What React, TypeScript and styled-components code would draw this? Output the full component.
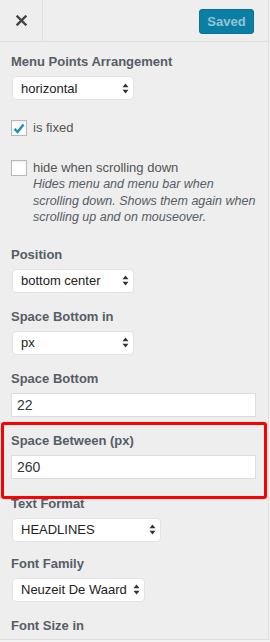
import React from "react";
import styled, { createGlobalStyle } from "styled-components";

const Global = createGlobalStyle`
  html, body { margin: 0; padding: 0; background: #f3f3f3; }
  body { font-family: "Liberation Sans", Arial, sans-serif; color: #555d66; }
  * { box-sizing: border-box; }
`;

const Panel = styled.div`
  width: 269px;
  height: 640px;
  background: #eeeeee;
  border-right: 1px solid #dedede;
  border-bottom: 1px solid #dcdcdc;
  overflow: hidden;
`;

const Header = styled.div`
  display: flex;
  align-items: center;
  height: 42px;
  border-bottom: 1px solid #dddddd;
`;

const CloseButton = styled.div`
  width: 43px;
  height: 41px;
  border-right: 1px solid #dddddd;
  display: flex;
  align-items: center;
  justify-content: center;
`;

const SavedButton = styled.div`
  margin-left: auto;
  margin-right: 14px;
  width: 55px;
  height: 25px;
  border-radius: 3px;
  background: #0a7fa3;
  border: 1px solid #08739a;
  color: #93c4d6;
  font-size: 13px;
  font-weight: bold;
  display: flex;
  align-items: center;
  justify-content: center;
  margin-top: 1px;
`;

const Content = styled.div`
  padding: 11px 12px 0 11px;
  display: flex;
  flex-direction: column;
`;

const Section = styled.div<{ $gap?: number }>`
  position: relative;
  display: flex;
  flex-direction: column;
  margin-bottom: ${(p) => p.$gap ?? 15}px;
`;

const Highlight = styled.div`
  position: absolute;
  left: -10px;
  right: -11px;
  top: -10px;
  bottom: -20px;
  border: 3px solid #ff0000;
  border-radius: 3px;
  pointer-events: none;
  z-index: 2;
`;

const Label = styled.div`
  font-size: 13px;
  font-weight: bold;
  line-height: 18px;
  color: #555d66;
  margin-bottom: 5px;
`;

const SelectBox = styled.div<{ $w: number }>`
  width: ${(p) => p.$w}px;
  height: 24px;
  margin-left: 1px;
  background: #ffffff;
  border: 1px solid #e2e2e2;
  border-radius: 4px;
  display: flex;
  align-items: center;
  padding: 0 4px 0 8px;
  font-size: 13px;
  color: #222222;
`;

const SelectText = styled.span`
  flex: 1;
  white-space: nowrap;
`;

const TextInput = styled.div`
  width: 100%;
  height: 24px;
  background: #ffffff;
  border: 1px solid #dddddd;
  display: flex;
  align-items: center;
  padding: 0 5px;
  font-size: 14px;
  color: #32373c;
`;

const CheckRow = styled.div<{ $mb: number }>`
  display: flex;
  align-items: flex-start;
  gap: 6px;
  margin-bottom: ${(p) => p.$mb}px;
`;

const Box = styled.div`
  width: 16px;
  height: 16px;
  flex: none;
  background: #ffffff;
  border: 1px solid #b4b9be;
  box-shadow: inset 0 1px 2px rgba(0, 0, 0, 0.08);
  display: flex;
  align-items: center;
  justify-content: center;
`;

const CheckText = styled.div`
  display: flex;
  flex-direction: column;
  font-size: 13px;
  line-height: 16.5px;
  color: #555555;
`;

const Description = styled.div`
  font-style: italic;
  font-size: 12.5px;
  line-height: 16.5px;
  color: #555d66;
`;

const Arrows = () => (
  <svg width="7" height="11" viewBox="0 0 7 11">
    <path d="M3.5 0.5 L6.5 4.2 L0.5 4.2 Z" fill="#333" />
    <path d="M3.5 10.5 L6.5 6.8 L0.5 6.8 Z" fill="#333" />
  </svg>
);

const Select = ({ w, value }: { w: number; value: string }) => (
  <SelectBox $w={w}>
    <SelectText>{value}</SelectText>
    <Arrows />
  </SelectBox>
);

export default function App() {
  return (
    <>
      <Global />
      <Panel>
        <Header>
          <CloseButton>
            <svg width="11" height="11" viewBox="0 0 11 11">
              <path d="M1.5 1.5 L9.5 9.5 M9.5 1.5 L1.5 9.5" stroke="#444" strokeWidth="2.4" strokeLinecap="square" />
            </svg>
          </CloseButton>
          <SavedButton>Saved</SavedButton>
        </Header>
        <Content>
          <Section $gap={20}>
            <Label>Menu Points Arrangement</Label>
            <Select w={122} value="horizontal" />
          </Section>
          <CheckRow $mb={23}>
            <Box>
              <svg width="12" height="11" viewBox="0 0 12 11">
                <path d="M1.5 5.8 L4.6 9 L10.5 1.5" stroke="#1e8cbe" strokeWidth="2.4" fill="none" />
              </svg>
            </Box>
            <CheckText>is fixed</CheckText>
          </CheckRow>
          <CheckRow $mb={20}>
            <Box />
            <CheckText>
              <span>hide when scrolling down</span>
              <Description>
                Hides menu and menu bar when scrolling down. Shows them again when scrolling up and on mouseover.
              </Description>
            </CheckText>
          </CheckRow>
          <Section>
            <Label>Position</Label>
            <Select w={122} value="bottom center" />
          </Section>
          <Section>
            <Label>Space Bottom in</Label>
            <Select w={122} value="px" />
          </Section>
          <Section>
            <Label>Space Bottom</Label>
            <TextInput>22</TextInput>
          </Section>
          <Section $gap={16}>
            <Highlight />
            <Label>Space Between (px)</Label>
            <TextInput>260</TextInput>
          </Section>
          <Section $gap={13}>
            <Label>Text Format</Label>
            <Select w={149} value="HEADLINES" />
          </Section>
          <Section>
            <Label>Font Family</Label>
            <Select w={133} value="Neuzeit De Waard" />
          </Section>
          <Section>
            <Label>Font Size in</Label>
          </Section>
        </Content>
      </Panel>
    </>
  );
}
